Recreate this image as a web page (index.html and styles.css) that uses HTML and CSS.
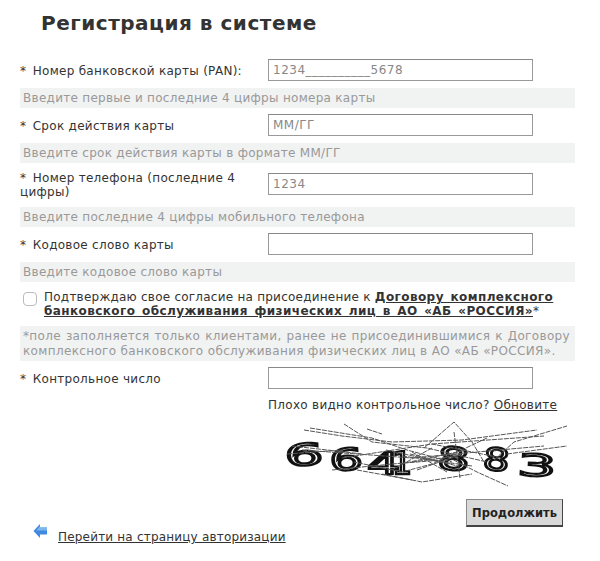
FILE: index.html
```html
<!DOCTYPE html>
<html lang="ru">
<head>
    <meta charset="UTF-8">
    <title>Регистрация в системе</title>
    <link rel="stylesheet" href="styles.css">
</head>
<body>
    <div class="page">
        <h1 class="title">Регистрация в системе</h1>

        <div class="row row-first">
            <label class="label">*&#8198; Номер банковской карты (PAN):</label>
            <input class="field" type="text" placeholder="1234__________5678">
        </div>
        <div class="hint">Введите первые и последние 4 цифры номера карты</div>

        <div class="row">
            <label class="label">*&#8198; Срок действия карты</label>
            <input class="field" type="text" placeholder="ММ/ГГ">
        </div>
        <div class="hint">Введите срок действия карты в формате ММ/ГГ</div>

        <div class="row row-tall">
            <label class="label">*&#8198; Номер телефона (последние 4 цифры)</label>
            <input class="field" type="text" placeholder="1234">
        </div>
        <div class="hint">Введите последние 4 цифры мобильного телефона</div>

        <div class="row">
            <label class="label">*&#8198; Кодовое слово карты</label>
            <input class="field" type="text">
        </div>
        <div class="hint">Введите кодовое слово карты</div>

        <div class="agree">
            <span class="check"></span>
            <div class="agree-text">Подтверждаю свое согласие на присоединение к <a href="#" class="doc-link">Договору комплексного банковского обслуживания физических лиц в АО «АБ «РОССИЯ»</a>*</div>
        </div>
        <div class="note">*поле заполняется только клиентами, ранее не присоединившимися к Договору комплексного банковского обслуживания физических лиц в АО «АБ «РОССИЯ».</div>

        <div class="row row-captcha">
            <label class="label">*&#8198; Контрольное число</label>
            <input class="field" type="text">
        </div>
        <div class="refresh">Плохо видно контрольное число? <a href="#">Обновите</a></div>

        <svg class="captcha" width="285" height="70" viewBox="0 0 285 70">
            <g class="captcha-digits">
                <text transform="translate(3 46) rotate(-2) scale(1.45 0.72)">6</text>
                <text transform="translate(48 51) rotate(-3) scale(1.25 0.72)">6</text>
                <text transform="translate(85 54) scale(1.25 0.72)">4</text>
                <text transform="translate(110 54) scale(0.75 0.75)">1</text>
                <text transform="translate(155 49) rotate(3) scale(1.2 0.75)">8</text>
                <text transform="translate(200 49) rotate(6) scale(1 0.74)">8</text>
                <text transform="translate(235 55) rotate(3) scale(1.45 0.72)">3</text>
            </g>
            <g class="captcha-noise">
                <path d="M22 10 L60 16 L110 22 L180 20 L255 10"/>
                <path d="M28 8 L90 18 L125 30 L170 42"/>
                <path d="M62 4 L90 22 L145 28 L205 42"/>
                <path d="M85 9 L100 14 M142 28 L172 2 L190 22 L202 42"/>
                <path d="M160 34 L195 52 L226 66"/>
                <path d="M212 40 L232 22 L285 6"/>
                <path d="M205 18 L150 44 L120 52 L72 42"/>
                <path d="M50 50 L110 44 L160 40"/>
                <path d="M100 54 L140 62 L190 54 M75 50 L130 60"/>
                <path d="M150 24 L262 16"/>
                <path d="M20 30 L130 38 L195 32 L262 26"/>
                <path d="M60 38 L150 24 L220 38"/>
                <path d="M172 12 L178 58"/>
                <path d="M225 34 L285 26 M130 32 L165 52"/>
                <path d="M120 36 L190 46 M118 44 L185 30 M135 50 L180 34"/>
                <path d="M104 30 L176 46 M150 28 L110 50"/>
                <path d="M5 34 L60 30 M10 26 L80 34 M130 42 L175 36 M128 34 L170 44"/>
            </g>
        </svg>

        <div class="actions">
            <button class="btn" type="button">Продолжить</button>
        </div>

        <div class="back">
            <svg class="back-icon" width="15" height="16" viewBox="0 0 15 16">
                <path d="M0.5 8 L7 1 V4.5 H14 V11.5 H7 V15 Z" fill="#3f8ae0"/>
                <path d="M7 4.5 H14 V7.5 H3.5 L7 3 Z" fill="#7fb6ee"/>
            </svg>
            <a href="#" class="back-link">Перейти на страницу авторизации</a>
        </div>
    </div>
</body>
</html>
```

FILE: styles.css
```css
body {
    margin: 0;
    background-color: #fff;
    color: #333;
    overflow: hidden;
    font-family: "DejaVu Sans", Verdana, sans-serif;
    font-size: 12px;
    letter-spacing: 0.29px;
}
a {
    color: #333;
}
.page {
    width: 555px;
    padding: 11px 0 0 20px;
}
.title {
    margin: 0 0 24px 21px;
    font-size: 20px;
    line-height: 24px;
    letter-spacing: 0.52px;
    color: #333;
}
.row {
    display: grid;
    grid-template-columns: 248px 265px;
    align-items: center;
    min-height: 22px;
    margin-top: 6px;
}
.row-first {
    margin-top: 0;
}
.row-tall {
    margin-top: 8px;
    margin-bottom: 8px;
}
.row-tall .label {
    padding-top: 0;
}
.row-tall .field {
    align-self: start;
    margin-top: 2px;
}
.label {
    padding-top: 2px;
    line-height: 14px;
}
.field {
    box-sizing: border-box;
    width: 265px;
    height: 22px;
    padding: 0 4px;
    border: 1px solid #999;
    border-top-color: #888;
    background: #fff;
    font-family: inherit;
    font-size: 12px;
    letter-spacing: 0.5px;
}
.field::placeholder {
    color: #888;
    opacity: 1;
}
.hint {
    margin-top: 7px;
    padding-left: 3px;
    height: 20px;
    line-height: 21px;
    background: #f1f2f2;
    color: #999;
}
.agree {
    display: flex;
    margin-top: 8px;
}
.check {
    box-sizing: border-box;
    flex: none;
    width: 14px;
    height: 14px;
    margin: 2px 7px 0 3px;
    border: 1px solid #bbb;
    border-radius: 4px;
    background: #fff;
}
.agree-text {
    width: 515px;
    line-height: 14px;
    letter-spacing: 0.24px;
}
.doc-link {
    font-weight: bold;
    letter-spacing: 0.42px;
    word-spacing: 2px;
}
.note {
    margin-top: 8px;
    padding: 3px 5px 2px 3px;
    line-height: 15px;
    background: #f1f2f2;
    color: #999;
    letter-spacing: 0.35px;
    text-align: justify;
}
.refresh {
    margin: 9px 0 0 248px;
    line-height: 14px;
    white-space: nowrap;
}
.captcha {
    display: block;
    margin: 8px 0 0 262px;
    filter: blur(0.4px);
}
.captcha-digits text {
    font-family: "DejaVu Sans", sans-serif;
    font-size: 42px;
    fill: #fff;
    stroke: #111;
    stroke-width: 3;
}
.captcha-noise path {
    fill: none;
    stroke: #555;
    stroke-width: 1;
    stroke-dasharray: 5 1;
}
.actions {
    display: flex;
    justify-content: flex-end;
    width: 543px;
    margin-top: 9px;
}
.btn {
    width: 97px;
    height: 28px;
    padding: 0;
    border: 1px solid #888;
    border-right-color: #444;
    border-bottom: 2px solid #444;
    background: #d9d9d9;
    color: #222;
    font-family: inherit;
    font-size: 11.5px;
    font-weight: bold;
    letter-spacing: 0;
}
.back {
    display: flex;
    align-items: flex-start;
    gap: 10px;
    margin-left: 13px;
    margin-top: -4px;
}
.back-link {
    margin-top: 7px;
    letter-spacing: 0.19px;
}
```
